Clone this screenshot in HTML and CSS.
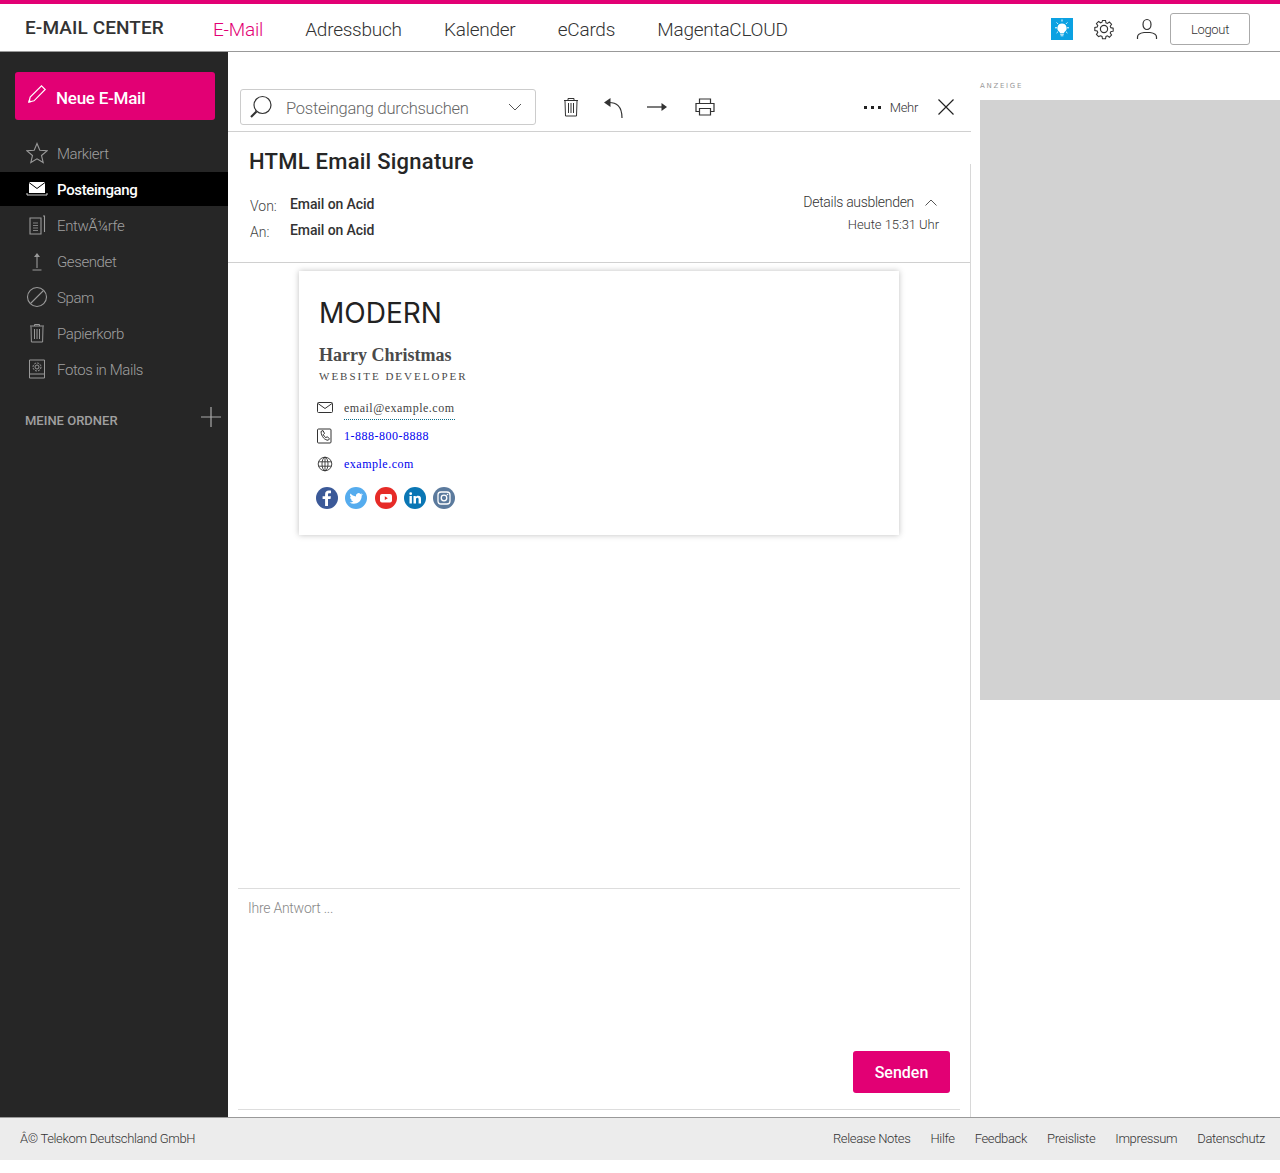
FILE: index.html
```html
<!DOCTYPE html>
<html lang="de">
<head>
    <meta charset="UTF-8">
    <title>E-Mail Center</title>
    <link rel="stylesheet" href="styles.css">
</head>
<body>
    <header class="topbar">
        <div class="brand">E-MAIL CENTER</div>
        <nav class="topnav">
            <a class="active">E-Mail</a>
            <a>Adressbuch</a>
            <a>Kalender</a>
            <a>eCards</a>
            <a>MagentaCLOUD</a>
        </nav>
        <div class="top-actions">
            <span class="bulb">
                <svg width="22" height="22" viewBox="0 0 22 22"><path d="M11 5.5a4.6 4.6 0 0 0-2.6 8.4c.5.4.7.9.7 1.4h3.8c0-.5.2-1 .7-1.4A4.6 4.6 0 0 0 11 5.5z" fill="#fff"/><path d="M9.2 16.3h3.6M9.6 17.8h2.8" stroke="#d5f0fb" stroke-width="1"/><path d="M11 1.5v2M4 9.8h2M16 9.8h2M5.6 4.5l1.3 1.3M16.4 4.5l-1.3 1.3M5.6 15l1.3-1.2M16.4 15l-1.3-1.2" stroke="#fff" stroke-width="1"/></svg>
            </span>
            <svg class="gear" width="22" height="22" viewBox="0 0 22 22" fill="none" stroke="#333" stroke-width="1.2"><path d="M9.3 1.5h3.4l.5 2.6 1.6.7 2.2-1.5 2.4 2.4-1.5 2.2.7 1.6 2.6.5v3.4l-2.6.5-.7 1.6 1.5 2.2-2.4 2.4-2.2-1.5-1.6.7-.5 2.6H9.3l-.5-2.6-1.6-.7L5 19.4 2.6 17l1.5-2.2-.7-1.6-2.6-.5V9.3l2.6-.5.7-1.6L2.6 5 5 2.6l2.2 1.5 1.6-.7z" transform="translate(1.1 1.1) scale(.9)"/><circle cx="11" cy="11" r="3.6"/></svg>
            <svg class="user" width="22" height="22" viewBox="0 0 22 22" fill="none" stroke="#333" stroke-width="1.2"><ellipse cx="11" cy="6.5" rx="4" ry="5"/><path d="M1.5 21v-2c0-3 3-4 6.5-4.500h6c3.500.5 6.500 1.500 6.500 4.500v2"/></svg>
            <button class="logout">Logout</button>
        </div>
    </header>

    <div class="layout">
        <aside class="sidebar">
            <button class="compose">
                <svg width="20" height="20" viewBox="0 0 20 20" fill="none" stroke="#fff" stroke-width="1.2"><path d="M2 18l1.2-5L14.5 1.8l3.700 3.700L7 16.800z"/><path d="M2 18l1.500-.4-1.100-1.100z" fill="#fff"/></svg>
                Neue E-Mail
            </button>
            <ul class="folders">
                <li>
                    <svg width="22" height="22" viewBox="0 0 22 22" fill="none" stroke="#999" stroke-width="1.1"><path d="M11 1.5l2.8 6.700 7.200.6-5.500 4.700 1.700 7L11 16.800l-6.200 3.700 1.700-7L1 8.800l7.200-.6z"/></svg>
                    Markiert
                </li>
                <li class="current">
                    <svg width="22" height="22" viewBox="0 0 22 22"><path d="M3 4h16v11H3z" fill="#fff"/><path d="M3 4.500l8 6 8-6" fill="none" stroke="#000" stroke-width="1"/><path d="M1 15v2h20v-2" fill="none" stroke="#ccc" stroke-width="1"/></svg>
                    Posteingang
                </li>
                <li>
                    <svg width="22" height="22" viewBox="0 0 22 22" fill="none" stroke="#999" stroke-width="1.1"><path d="M4 4h11v16H4z"/><path d="M17 2h1.500v16"/><path d="M7 9h5M7 11.500h5M7 14h5M7 16.500h5" stroke-width=".8"/></svg>
                    Entw&Atilde;&frac14;rfe
                </li>
                <li>
                    <svg width="22" height="22" viewBox="0 0 22 22" fill="none" stroke="#999" stroke-width="1.1"><path d="M11 4v14M6.500 20h9"/><path d="M8 7l3-4 3 4z" fill="#999" stroke="none"/></svg>
                    Gesendet
                </li>
                <li>
                    <svg width="22" height="22" viewBox="0 0 22 22" fill="none" stroke="#999" stroke-width="1.1"><circle cx="11" cy="11" r="9.5"/><path d="M4.500 17.500l13-13"/></svg>
                    Spam
                </li>
                <li>
                    <svg width="22" height="22" viewBox="0 0 22 22" fill="none" stroke="#999" stroke-width="1"><path d="M4 4h14M8.500 4V2.500h5V4M5 4.500l.4 15.500h11.200l.4-15.500M8.500 7v10M11 7v10M13.500 7v10"/></svg>
                    Papierkorb
                </li>
                <li>
                    <svg width="22" height="22" viewBox="0 0 22 22" fill="none" stroke="#999" stroke-width="1"><path d="M3.500 2h15v18h-15zM3.500 16h15"/><circle cx="11" cy="9" r="2"/><circle cx="11" cy="9" r="4" stroke-dasharray="2 1.1"/></svg>
                    Fotos in Mails
                </li>
            </ul>
            <div class="my-folders">
                <span>MEINE ORDNER</span>
                <svg width="20" height="20" viewBox="0 0 20 20" stroke="#aaa" stroke-width="1.2"><path d="M10 0v20M0 10h20"/></svg>
            </div>
        </aside>

        <main class="mail">
            <div class="toolbar">
                <div class="search">
                    <svg width="24" height="24" viewBox="0 0 24 24" fill="none" stroke="#333"><circle cx="13.5" cy="10" r="8.5" stroke-width="1.2"/><path d="M7.500 16.500L2 22" stroke-width="2.2"/></svg>
                    <span class="search-text">Posteingang durchsuchen</span>
                    <svg width="14" height="8" viewBox="0 0 14 8" fill="none" stroke="#555"><path d="M1 1l6 6 6-6"/></svg>
                </div>
                <svg class="trash" width="18" height="20" viewBox="0 0 18 20" fill="none" stroke="#333" stroke-width="1"><path d="M2 3.500h14M6 3V1.500h6V3M3 4l.5 15h11l.5-15M6.500 6v10M9 6v10M11.500 6v10"/></svg>
                <svg class="reply" width="20" height="22" viewBox="0 0 20 22" fill="none" stroke="#333" stroke-width="1.2"><path d="M5 5.500c7 0 13 3 13 15.500"/><path d="M0 5.500L6.500 1v9z" fill="#333" stroke="none"/></svg>
                <svg class="forward" width="20" height="10" viewBox="0 0 20 10"><path d="M0 5h16" stroke="#333" stroke-width="1.3"/><path d="M14.500 1l5.500 4-5.500 4z" fill="#333"/></svg>
                <svg class="print" width="20" height="18" viewBox="0 0 20 18" fill="none" stroke="#333" stroke-width="1.2"><path d="M4.500 5V1h11v4M4.500 13.500H1V5.500h18v8h-3.500M4.500 10.500h11v6.500h-11z"/></svg>
                <div class="more">
                    <svg width="17" height="3" viewBox="0 0 17 3" fill="#222"><path d="M0 0h3v3H0zM7 0h3v3H7zM14 0h3v3h-3z"/></svg>
                    <span>Mehr</span>
                </div>
                <svg class="close" width="16" height="16" viewBox="0 0 16 16" stroke="#222" stroke-width="1.2"><path d="M.5.5l15 15M15.500.5l-15 15"/></svg>
            </div>

            <section class="reading">
                <div class="mail-head">
                    <h1 class="subject">HTML Email Signature</h1>
                    <div class="head-row">
                        <div class="people">
                            <div class="person"><span class="who">Von:</span><strong>Email on Acid</strong></div>
                            <div class="person"><span class="who">An:</span><strong>Email on Acid</strong></div>
                        </div>
                        <div class="details">
                            <div class="toggle">Details ausblenden
                                <svg width="12" height="7" viewBox="0 0 12 7" fill="none" stroke="#555"><path d="M.5 6.500L6 1l5.500 5.500"/></svg>
                            </div>
                            <div class="when">Heute 15:31 Uhr</div>
                        </div>
                    </div>
                </div>

                <div class="mail-body">
                    <div class="sig-card">
                        <div class="sig-logo">MODERN</div>
                        <div class="sig-name">Harry Christmas</div>
                        <div class="sig-role">WEBSITE DEVELOPER</div>
                        <div class="sig-line">
                            <svg width="16" height="12" viewBox="0 0 16 12" fill="none" stroke="#333"><rect x=".5" y=".5" width="15" height="10" rx="1"/><path d="M1 1.500l7 5 7-5"/></svg>
                            <a class="sig-mail">email@example.com</a>
                        </div>
                        <div class="sig-line">
                            <svg width="16" height="16" viewBox="0 0 16 16" fill="none" stroke="#333"><rect x=".5" y="1" width="13.5" height="14" rx="1"/><path d="M4 3.500l2-1 1.500 3-1.200 1c.5 1.500 1.300 2.500 2.600 3.200l1.200-1 2.400 2-1.200 1.500c-3.500.2-7-3.700-7.300-8.700z"/></svg>
                            <a class="sig-link">1-888-800-8888</a>
                        </div>
                        <div class="sig-line">
                            <svg width="16" height="16" viewBox="0 0 16 16" fill="none" stroke="#333" stroke-width=".9"><circle cx="8" cy="8" r="6.8"/><ellipse cx="8" cy="8" rx="3" ry="6.8"/><path d="M1.500 5.800h13M1.500 10.200h13M8 1v14"/></svg>
                            <a class="sig-link">example.com</a>
                        </div>
                        <div class="social">
                            <svg width="22" height="22" viewBox="0 0 22 22"><circle cx="11" cy="11" r="11" fill="#3b5998"/><path d="M12 19v-7h2.500l.4-2.800H12V7.500c0-.8.300-1.300 1.400-1.300H15V3.700c-.3 0-1.200-.1-2.200-.1-2.200 0-3.700 1.300-3.700 3.700v1.900H6.600V12h2.500v7z" fill="#fff"/></svg>
                            <svg width="22" height="22" viewBox="0 0 22 22"><circle cx="11" cy="11" r="11" fill="#55acee"/><path d="M17.500 7.300c-.5.200-1 .4-1.500.4.500-.3 1-.8 1.200-1.400-.5.300-1.100.5-1.700.7a2.700 2.700 0 0 0-4.600 2.400c-2.200-.1-4.200-1.200-5.500-2.800-.7 1.200-.4 2.800.8 3.600-.4 0-.8-.1-1.200-.3 0 1.300.9 2.400 2.100 2.700-.4.100-.8.100-1.200 0 .3 1.100 1.300 1.800 2.500 1.900-1.100.8-2.500 1.200-3.900 1.100 4.800 3 12.300.6 12.200-7 .5-.4.900-.8 1.300-1.300z" fill="#fff"/></svg>
                            <svg width="22" height="22" viewBox="0 0 22 22"><circle cx="11" cy="11" r="11" fill="#e62b27"/><rect x="5" y="7" width="12" height="8.5" rx="2" fill="#fff"/><path d="M9.800 9.300l3 1.900-3 1.900z" fill="#e62b27"/></svg>
                            <svg width="22" height="22" viewBox="0 0 22 22"><circle cx="11" cy="11" r="11" fill="#0a76b4"/><path d="M5.500 9h2.400v7.500H5.500zM6.700 5.300a1.400 1.400 0 1 1 0 2.800 1.400 1.400 0 0 1 0-2.800zM9.500 9h2.300v1c.4-.7 1.300-1.200 2.400-1.200 2.300 0 2.800 1.500 2.800 3.500v4.200h-2.400v-3.800c0-.9 0-2-1.200-2s-1.400 1-1.400 1.900v3.900H9.500z" fill="#fff"/></svg>
                            <svg width="22" height="22" viewBox="0 0 22 22"><circle cx="11" cy="11" r="11" fill="#5b7a9d"/><rect x="5" y="5" width="12" height="12" rx="3" fill="none" stroke="#fff" stroke-width="1.3"/><circle cx="11" cy="11" r="2.8" fill="none" stroke="#fff" stroke-width="1.3"/><circle cx="14.5" cy="7.5" r=".8" fill="#fff"/></svg>
                        </div>
                    </div>
                </div>

                <div class="reply-box">
                    <div class="reply-hint">Ihre Antwort ...</div>
                    <button class="send">Senden</button>
                </div>
            </section>
        </main>

        <aside class="ads">
            <div class="ad-label">ANZEIGE</div>
            <div class="ad-slot"></div>
        </aside>
    </div>

    <footer class="footer">
        <span>&Acirc;&copy; Telekom Deutschland GmbH</span>
        <nav class="footer-links">
            <a>Release Notes</a>
            <a>Hilfe</a>
            <a>Feedback</a>
            <a>Preisliste</a>
            <a>Impressum</a>
            <a>Datenschutz</a>
        </nav>
    </footer>
</body>
</html>
```

FILE: styles.css
```css
* {
    box-sizing: border-box;
}

body {
    margin: 0;
    height: 1173px;
    font-family: Roboto, "Liberation Sans", sans-serif;
    font-weight: 300;
    color: #333;
    background-color: #fff;
}

svg {
    display: block;
    flex: none;
}

/* top bar */
.topbar {
    display: flex;
    align-items: center;
    height: 52px;
    padding: 2px 0 0 25px;
    border-top: 4px solid #e20074;
    border-bottom: 1px solid #999;
}

.brand {
    width: 188px;
    padding-bottom: 2px;
    font-size: 19px;
    font-weight: 500;
    letter-spacing: 0.1px;
    color: #333;
}

.topnav {
    display: flex;
    gap: 42.3px;
    padding-top: 2px;
    font-size: 19px;
    letter-spacing: -0.25px;
}

.topnav .active {
    color: #e20074;
}

.top-actions {
    display: flex;
    align-items: center;
    margin-left: auto;
    margin-right: 30px;
}

.bulb {
    display: block;
    width: 22px;
    height: 22px;
    background-color: #0ba1e2;
}

.gear {
    margin-left: 20px;
}

.user {
    margin-left: 21px;
}

.logout {
    width: 80px;
    height: 32px;
    margin-left: 12px;
    padding-top: 2px;
    border: 1px solid #aaa;
    border-radius: 3px;
    background-color: #fff;
    font-family: inherit;
    font-weight: 300;
    font-size: 13px;
    letter-spacing: -0.3px;
    color: #333;
}

/* columns */
.layout {
    display: flex;
    height: 1065px;
}

.sidebar {
    width: 228px;
    flex: none;
    padding-top: 20px;
    background-color: #262626;
    color: #a0a0a0;
}

.compose {
    display: flex;
    align-items: center;
    gap: 9px;
    width: 200px;
    height: 48px;
    margin-left: 15px;
    padding: 4px 0 0 12px;
    border: none;
    border-radius: 3px;
    background-color: #e20074;
    color: #fff;
    font-family: inherit;
    font-size: 17px;
    font-weight: 500;
    letter-spacing: -0.25px;
}

.compose svg {
    margin-top: -8px;
}

.folders {
    list-style: none;
    margin: 16px 0 0;
    padding: 0;
}

.folders li {
    display: flex;
    align-items: center;
    gap: 9px;
    height: 34px;
    margin-bottom: 2px;
    padding: 2px 0 0 26px;
    font-size: 15px;
    letter-spacing: -0.4px;
}

.folders li svg {
    margin-top: -2px;
}

.folders .current {
    background-color: #000;
    color: #fff;
    font-weight: 500;
    letter-spacing: -0.35px;
}

.my-folders {
    display: flex;
    align-items: center;
    justify-content: space-between;
    margin-top: 22px;
    padding: 0 7px 0 25px;
    font-size: 13px;
    font-weight: 500;
}

.my-folders span {
    margin-top: 5px;
}

.my-folders svg {
    margin-top: -3px;
}

/* mail column */
.mail {
    display: flex;
    flex-direction: column;
    width: 743px;
    flex: none;
}

.toolbar {
    display: flex;
    align-items: center;
    height: 80px;
    padding: 37px 17px 6px 12px;
    border-bottom: 1px solid #d0d0d0;
}

.search {
    display: flex;
    align-items: center;
    width: 296px;
    height: 36px;
    padding: 0 13px 0 8px;
    border: 1px solid #ccc;
    border-radius: 3px;
}

.search-text {
    flex: 1;
    height: 17px;
    margin: 2px 0 0 13px;
    overflow: hidden;
    font-size: 16.5px;
    line-height: 17px;
    letter-spacing: -0.25px;
    color: #666;
}

.trash {
    margin-left: 26px;
}

.reply {
    margin-left: 24px;
    margin-top: 2px;
}

.forward {
    margin-left: 23px;
}

.print {
    margin-left: 28px;
}

.more {
    display: flex;
    align-items: center;
    gap: 9px;
    margin-left: auto;
    font-size: 13px;
    letter-spacing: -0.3px;
}

.close {
    margin-left: 20px;
}

.reading {
    position: relative;
    display: flex;
    flex-direction: column;
    flex: 1;
}

/* side rule only starts a bit below the toolbar */
.reading::after {
    content: "";
    position: absolute;
    top: 32px;
    right: 0;
    bottom: 0;
    width: 1px;
    background-color: #d8d8d8;
}

.mail-head {
    height: 131px;
    padding: 16px 32px 0 21px;
    border-bottom: 1px solid #d0d0d0;
}

.subject {
    margin: 0;
    font-size: 22px;
    line-height: 28px;
    font-weight: 500;
    letter-spacing: 0.25px;
    color: #262626;
}

.head-row {
    display: flex;
    justify-content: space-between;
    margin-top: 15px;
}

.person {
    display: flex;
    align-items: center;
    height: 26px;
    padding-left: 1px;
    font-size: 14px;
}

.who {
    width: 40px;
    padding-top: 3px;
    color: #444;
}

.person strong {
    font-weight: 500;
    letter-spacing: -0.1px;
}

.details {
    margin-top: 1px;
    text-align: right;
    font-size: 14px;
    letter-spacing: -0.3px;
}

.toggle {
    display: flex;
    align-items: center;
    justify-content: flex-end;
    gap: 11px;
    height: 20px;
    margin-right: 2px;
}

.when {
    margin-top: 4px;
    line-height: 18px;
    font-size: 13px;
    letter-spacing: -0.05px;
}

.mail-body {
    flex: 1;
    padding: 8px 0 0 71px;
}

.sig-card {
    width: 600px;
    height: 264px;
    padding: 24px 0 0 17px;
    background-color: #fff;
    box-shadow: 0 0 6px rgba(0, 0, 0, 0.25);
    font-family: "Liberation Serif", serif;
    font-weight: 400;
}

.sig-logo {
    margin-left: 3px;
    font-family: Inter, sans-serif;
    font-size: 28px;
    line-height: 36px;
    font-weight: 400;
    color: #222;
}

.sig-name {
    margin: 14px 0 0 3px;
    font-size: 18px;
    line-height: 20px;
    font-weight: 700;
    color: #4a4a4a;
}

.sig-role {
    margin: 4px 0 11px 3px;
    font-size: 11px;
    line-height: 14px;
    letter-spacing: 2px;
    color: #4a4a4a;
}

.sig-line {
    display: flex;
    align-items: center;
    gap: 11px;
    height: 28px;
    padding-left: 1px;
    font-size: 12px;
    letter-spacing: 0.5px;
}

.sig-mail {
    padding: 4px 0 3px;
    border-bottom: 1px dotted #0b6e8a;
    color: #444;
}

.sig-link {
    color: #00e;
}

.social {
    display: flex;
    gap: 7.25px;
    margin-top: 9px;
}

.reply-box {
    position: relative;
    height: 222px;
    margin: 0 11px 7px 10px;
    padding: 11px 10px 0;
    border-top: 1px solid #ddd;
    border-bottom: 1px solid #ddd;
}

.reply-hint {
    font-size: 14px;
    letter-spacing: -0.25px;
    color: #888;
}

.send {
    position: absolute;
    right: 10px;
    bottom: 16px;
    width: 97px;
    height: 42px;
    border: none;
    border-radius: 3px;
    background-color: #e20074;
    color: #fff;
    font-family: inherit;
    font-size: 16px;
    font-weight: 500;
}

/* ad column */
.ads {
    flex: 1;
    padding: 28px 0 0 9px;
}

.ad-label {
    height: 20px;
    font-family: "DejaVu Sans", sans-serif;
    font-size: 7px;
    font-weight: 400;
    letter-spacing: 1.7px;
    line-height: 12px;
    color: #999;
}

.ad-slot {
    height: 600px;
    background-color: #d2d2d2;
}

/* footer */
.footer {
    display: flex;
    align-items: center;
    justify-content: space-between;
    height: 43px;
    padding: 0 15px 2px 20px;
    border-top: 1px solid #999;
    background-color: #ececec;
    font-size: 13px;
    letter-spacing: -0.35px;
}

.footer-links {
    display: flex;
    gap: 20px;
}
```
